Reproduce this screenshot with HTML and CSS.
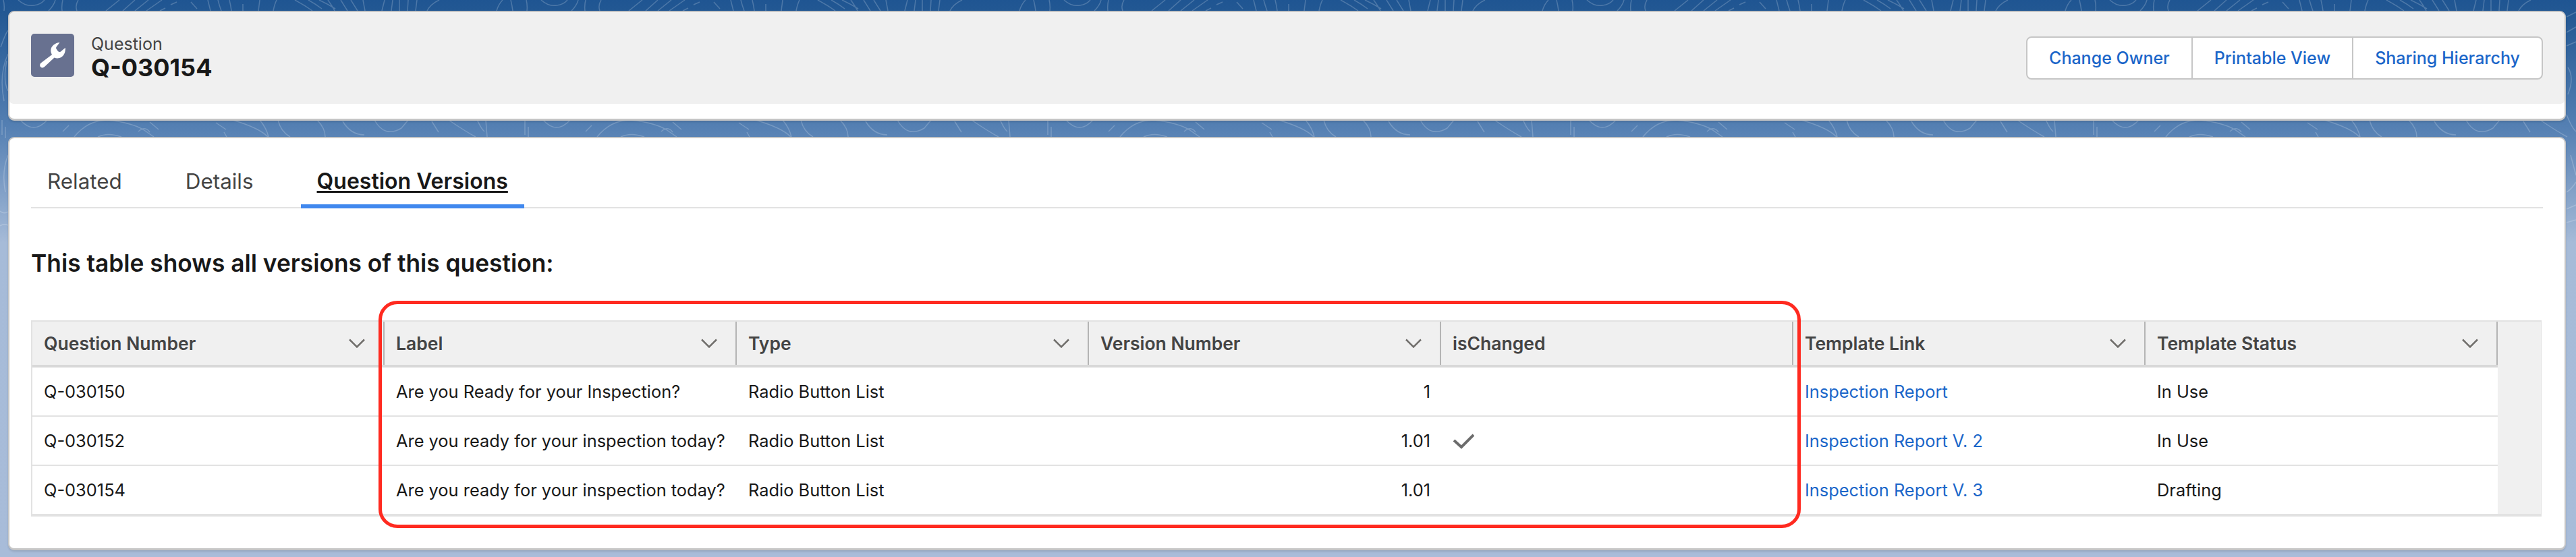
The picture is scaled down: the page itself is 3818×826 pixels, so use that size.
FILE: index.html
```html
<!DOCTYPE html>
<html lang="en">
<head>
<meta charset="utf-8">
<title>Question Q-030154</title>
<link rel="stylesheet" href="styles.css">
</head>
<body>
<svg class="backdrop" width="3818" height="400" aria-hidden="true">
  <defs>
    <pattern id="contours" width="775" height="400" patternUnits="userSpaceOnUse">
      <g class="contour">
        <path d="M5 0Q7 8 6 16M27 0Q38 10 50 8Q60 7 66 0M82 0Q80 8 72 16M93 0Q91 8 92 16M116 0Q111 8 114 16M177 0L157 16M200 0L182 16M220 0L200 16M240 0L217 16M245 12L237 16M253 7L262 3M283 3L292 13M308 0Q310 8 312 16M323 0Q325 8 328 16M340 0Q342 8 343 16M360 6V16M383 16Q384 8 385 0M405 16Q407 6 410 0M437 0Q452 8 463 16M457 0Q468 6 477 13M473 0Q486 6 497 13M486 0Q492 8 496 16M505 0Q510 8 515 16M520 0Q525 8 530 16M538 0L541 16M566 16L570 0M580 16L582 0M592 16V0M604 16L605 0M616 16L618 0M633 16Q638 6 651 0M736 16Q739 6 745 0M757 0Q759 8 760 16"/>
        <path d="M30 178Q50 200 70 178M93 195L102 186M110 203Q130 178 160 178Q195 182 212 192L228 203M145 203Q160 196 180 203M222 181L235 192M205 195Q215 186 222 196M320 182L335 192M332 196L336 203M345 178Q385 190 397 203M385 178Q395 190 398 203M412 178Q416 195 430 203M470 178Q482 190 482 203M508 180Q520 200 540 200M555 178Q570 205 595 190L605 178M640 180L650 196M665 178Q690 195 705 203M720 178L722 203"/>
        <path d="M1 70Q8 50 12 45M6 150Q-2 110 12 80M12 135Q4 120 10 90M3 178V200M8 188V205M12 230Q2 255 8 285M0 313Q6 318 12 314M0 335Q6 331 12 334M704 25L718 18M704 48L718 40M704 68L718 62M706 100Q716 115 706 140M704 170Q712 190 718 195M710 230L718 260M704 285Q712 280 718 270M704 310L718 304M704 330L718 326"/>
      </g>
    </pattern>
  </defs>
  <rect width="3818" height="400" fill="url(#contours)"/>
</svg>
<main class="page">
  <section class="card">
    <header class="record-head">
      <div class="record-id">
        <span class="record-icon">
          <svg width="64" height="64" viewBox="0 0 64 64"><path fill="#fff" d="M42.5 13C36 13.500 29.500 18 29.300 24.500C29.200 27 30 29 31 31L14.500 43.500C12.500 45.500 13 48.500 14.500 49.500C16 51 18.500 50.500 20 49L34.500 35.500C37 36.500 39.500 36.800 42 36C48 34.500 51.500 28 50.800 20.700L44 26.500C42.500 27.500 41 27 40 26L37.800 23C36.800 21.500 37 20 38 19Z"/></svg>
        </span>
        <div class="record-text">
          <div class="record-type">Question</div>
          <div class="record-name">Q-030154</div>
        </div>
      </div>
      <div class="btn-group">
        <a class="btn">Change Owner</a>
        <a class="btn">Printable View</a>
        <a class="btn">Sharing Hierarchy</a>
      </div>
    </header>
  </section>

  <section class="card card-main">
    <nav class="tabs">
      <a class="tab">Related</a>
      <a class="tab">Details</a>
      <a class="tab tab-active">Question Versions</a>
    </nav>
    <h2 class="section-title">This table shows all versions of this question:</h2>
    <div class="table-wrap">
      <table class="grid">
        <thead>
          <tr>
            <th><div class="th-in">Question Number<svg class="chev" width="24" height="14" viewBox="0 0 24 14"><path d="M1 1.500L12 12.500L23 1.500"/></svg></div></th>
            <th><div class="th-in">Label<svg class="chev" width="24" height="14" viewBox="0 0 24 14"><path d="M1 1.500L12 12.500L23 1.500"/></svg></div></th>
            <th><div class="th-in">Type<svg class="chev" width="24" height="14" viewBox="0 0 24 14"><path d="M1 1.500L12 12.500L23 1.500"/></svg></div></th>
            <th><div class="th-in">Version Number<svg class="chev" width="24" height="14" viewBox="0 0 24 14"><path d="M1 1.500L12 12.500L23 1.500"/></svg></div></th>
            <th><div class="th-in">isChanged</div></th>
            <th><div class="th-in">Template Link<svg class="chev" width="24" height="14" viewBox="0 0 24 14"><path d="M1 1.500L12 12.500L23 1.500"/></svg></div></th>
            <th><div class="th-in">Template Status<svg class="chev" width="24" height="14" viewBox="0 0 24 14"><path d="M1 1.500L12 12.500L23 1.500"/></svg></div></th>
          </tr>
        </thead>
        <tbody>
          <tr>
            <td>Q-030150</td>
            <td>Are you Ready for your Inspection?</td>
            <td>Radio Button List</td>
            <td class="num">1</td>
            <td></td>
            <td><a class="link">Inspection Report</a></td>
            <td>In Use</td>
          </tr>
          <tr>
            <td>Q-030152</td>
            <td>Are you ready for your inspection today?</td>
            <td>Radio Button List</td>
            <td class="num">1.01</td>
            <td><svg class="tick" width="32" height="24" viewBox="0 0 32 24"><path d="M2 11L13 21L31 3"/></svg></td>
            <td><a class="link">Inspection Report V. 2</a></td>
            <td>In Use</td>
          </tr>
          <tr>
            <td>Q-030154</td>
            <td>Are you ready for your inspection today?</td>
            <td>Radio Button List</td>
            <td class="num">1.01</td>
            <td></td>
            <td><a class="link">Inspection Report V. 3</a></td>
            <td>Drafting</td>
          </tr>
        </tbody>
      </table>
    </div>
    <div class="callout"></div>
  </section>
</main>
</body>
</html>
```

FILE: styles.css
```css
* { box-sizing: border-box; }
html, body { margin: 0; height: 100%; }
body {
  position: relative;
  width: 3818px;
  height: 826px;
  overflow: hidden;
  font-family: Inter, "Liberation Sans", sans-serif;
  color: #181818;
  background: linear-gradient(180deg, #1f5592 0, #235893 20px, #5580b3 190px, #a6bbd8 360px, #a8bcd9 826px);
}
.backdrop { position: absolute; left: 0; top: 0; }
.contour { fill: none; stroke: rgba(255, 255, 255, .2); stroke-width: 1.5; }

.page {
  position: relative;
  display: flex;
  flex-direction: column;
  gap: 24px;
  padding: 16px 15px 0 12px;
}
.card {
  background: #fff;
  border: 2px solid #c6c6c6;
  border-bottom-width: 3px;
  border-radius: 9px;
  box-shadow: 0 2px 3px rgba(0, 0, 0, .12);
  height: 163px;
}
.card-main {
  position: relative;
  height: 613px;
  padding: 0 32px;
}

.record-head {
  display: flex;
  justify-content: space-between;
  align-items: flex-start;
  height: 136px;
  padding: 32px 32px 0;
  background: #f0f0f0;
  border-radius: 7px 7px 6px 6px;
}
.record-id { display: flex; gap: 25px; }
.record-icon {
  display: block;
  width: 64px;
  height: 64px;
  background: #687190;
  border-radius: 5px;
}
.record-type { font-size: 25px; line-height: 30px; color: #444; }
.record-name { font-size: 36px; line-height: 40px; font-weight: 700; color: #181818; }

.btn-group {
  display: flex;
  margin-top: 4px;
  height: 64px;
  background: #fff;
  border: 2px solid #c6c6c6;
  border-radius: 8px;
}
.btn {
  display: flex;
  align-items: center;
  padding: 0 32px;
  font-size: 25px;
  font-weight: 500;
  color: #1b66c9;
  white-space: nowrap;
}
.btn + .btn { border-left: 2px solid #c6c6c6; }

.tabs {
  display: flex;
  gap: 46px;
  height: 104px;
  border-bottom: 2px solid #e2e2e2;
}
.tab {
  display: block;
  height: 104px;
  padding: 42px 24px 0;
  font-size: 31.4px;
  line-height: 44px;
  color: #444;
}
.tab-active {
  font-size: 32px;
  font-weight: 600;
  color: #181818;
  text-decoration: underline;
  text-underline-offset: 3px;
  border-bottom: 6px solid #4088ee;
}

.section-title {
  margin: 60px 0 0;
  font-size: 35.3px;
  line-height: 44px;
  font-weight: 600;
  color: #181818;
}

.table-wrap {
  margin: 62px 2px 0 0;
  background: #f0f0f0;
  border: 1.5px solid #e2e2e2;
  border-top-width: 2px;
  border-bottom-width: 4px;
  border-left-width: 2px;
}
.grid {
  width: 3654px;
  table-layout: fixed;
  border-collapse: separate;
  border-spacing: 0;
  background: #fff;
  font-size: 25.4px;
}
.grid th {
  padding: 0;
  background: #f0f0f0;
  border-bottom: 4px solid #d8d8d8;
  text-align: left;
  font-weight: 600;
  font-size: 26.5px;
  color: #444;
}
.th-in {
  display: flex;
  align-items: center;
  justify-content: space-between;
  height: 64px;
  padding: 0 27px 0 17px;
  border-right: 2px solid #b4b4b4;
}
.chev { flex: none; }
.chev path { fill: none; stroke: #706e6b; stroke-width: 2.500; }
.grid td {
  height: 73px;
  padding: 0 16px 0 17px;
  border-bottom: 2px solid #e2e2e2;
  color: #181818;
  white-space: nowrap;
}
.grid tbody tr:last-child td { border-bottom: 0; height: 71px; }
.grid td.num { text-align: right; }
.link { color: #1b66c9; }
.tick { display: block; }
.tick path { fill: none; stroke: #6b6b6b; stroke-width: 4; }

.callout {
  position: absolute;
  left: 547px;
  top: 241px;
  width: 2108px;
  height: 337px;
  border: 5px solid #ff2a20;
  border-radius: 28px;
  pointer-events: none;
}
```
